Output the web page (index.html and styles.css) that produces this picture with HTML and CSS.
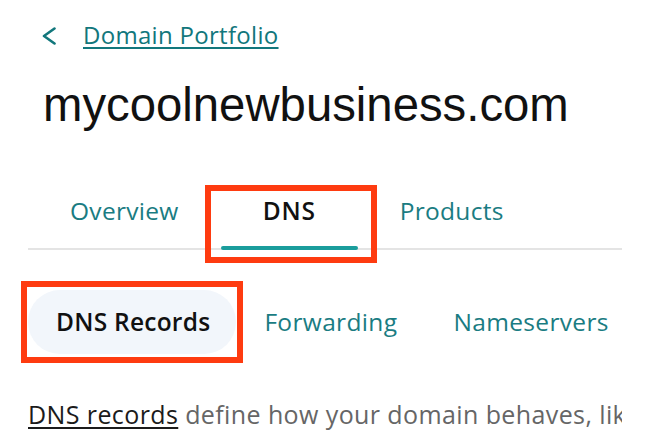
FILE: index.html
```html
<!DOCTYPE html>
<html lang="en">
<head>
<meta charset="utf-8">
<title>mycoolnewbusiness.com - DNS</title>
<link rel="stylesheet" href="styles.css">
</head>
<body>
<div class="page">
  <nav class="breadcrumb">
    <svg class="chevron" width="16" height="18" viewBox="0 0 16 18" aria-hidden="true">
      <polyline points="12.5,1.5 2,9 12.5,16.5" fill="none" stroke="#12777c" stroke-width="2.6" stroke-linecap="round" stroke-linejoin="round"/>
    </svg>
    <a class="crumb-link" href="#">Domain Portfolio</a>
  </nav>
  <h1 class="title">mycoolnewbusiness.com</h1>
  <div class="tabs">
    <div class="tab">Overview</div>
    <div class="tab tab-active">DNS</div>
    <div class="tab">Products</div>
  </div>
  <div class="subtabs">
    <div class="subtab subtab-active">DNS Records</div>
    <div class="subtab">Forwarding</div>
    <div class="subtab">Nameservers</div>
  </div>
  <p class="desc"><a class="desc-link" href="#">DNS records</a> define how your domain behaves, like</p>
</div>
</body>
</html>
```
FILE: styles.css
```css
html, body {
  margin: 0;
  padding: 0;
  background: #ffffff;
}

body {
  font-family: "Open Sans", "Noto Sans", sans-serif;
  color: #111111;
}

.page {
  width: 594px;
  padding-left: 28px;
  padding-top: 19px;
  overflow: hidden;
}

.breadcrumb {
  display: flex;
  align-items: center;
  height: 32px;
  padding-left: 14px;
}

.chevron {
  display: block;
  margin-top: 2px;
}

.crumb-link {
  margin-left: 25px;
  font-size: 24px;
  line-height: 32px;
  font-weight: 500;
  color: #12777c;
  text-decoration: underline;
  text-decoration-thickness: 2px;
  text-underline-offset: 3px;
  letter-spacing: 0.3px;
}

.title {
  margin: 26px 0 54px 0;
  padding-left: 15px;
  font-family: "Liberation Sans", Arial, sans-serif;
  font-weight: 400;
  font-size: 47.3px;
  line-height: 56px;
  color: #111111;
}

.tabs {
  display: flex;
  border-bottom: 2px solid #e4e4e4;
}

.tab {
  position: relative;
  padding: 8px 42px 21px 42px;
  font-size: 24.5px;
  line-height: 32px;
  font-weight: 500;
  color: #1a7c82;
  letter-spacing: 0.3px;
  white-space: nowrap;
}

.tab-active {
  color: #111111;
  font-weight: 600;
  letter-spacing: 0.8px;
}

.tab-active::after {
  content: "";
  position: absolute;
  left: 0;
  right: 0;
  bottom: -2px;
  height: 4px;
  border-radius: 2px;
  background: #1a9d9c;
}

.tab-active::before {
  content: "";
  position: absolute;
  left: -16px;
  right: -19px;
  top: -2px;
  bottom: -15px;
  border: 6px solid #fe3b10;
}

.subtabs {
  display: flex;
  margin-top: 40px;
}

.subtab {
  position: relative;
  flex-shrink: 0;
  padding: 16px 28px;
  border-radius: 32px;
  font-size: 24.5px;
  line-height: 32px;
  font-weight: 500;
  color: #1a7c82;
  letter-spacing: 0.35px;
  white-space: nowrap;
}

.subtab-active {
  background: #f2f6fb;
  color: #111111;
  font-weight: 600;
  letter-spacing: 0.25px;
  padding-right: 26px;
}

.subtab-active::after {
  content: "";
  position: absolute;
  left: -7px;
  right: -7px;
  top: -9px;
  bottom: -9px;
  border: 6px solid #fe3b10;
}

.desc {
  margin: 44px 0 0 0;
  font-size: 25px;
  line-height: 32px;
  color: #666666;
  white-space: nowrap;
  letter-spacing: 0.4px;
}

.desc-link {
  color: #1b1b1b;
  font-weight: 500;
  text-decoration: underline;
  text-decoration-thickness: 2px;
  text-underline-offset: 3px;
}
```
